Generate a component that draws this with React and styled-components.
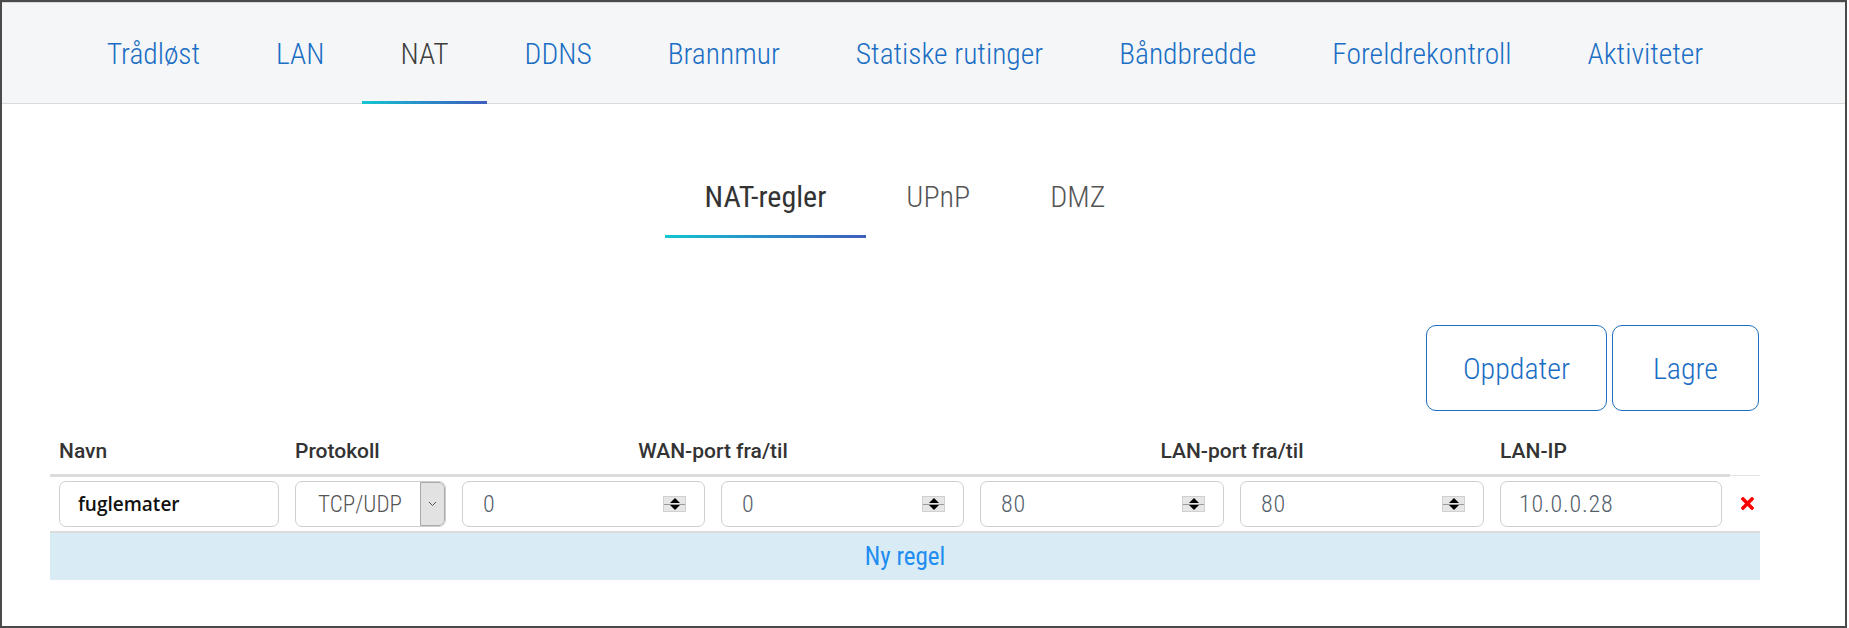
import React from "react";
import styled, { createGlobalStyle, css } from "styled-components";
import { FaTimes } from "react-icons/fa";

const cond = `"Roboto Condensed", "Liberation Sans Narrow", Roboto, sans-serif`;

const GlobalStyle = createGlobalStyle`
  html, body {
    margin: 0;
    padding: 0;
    background: #fff;
  }
  * {
    box-sizing: border-box;
  }
`;

const Frame = styled.div`
  width: 1847px;
  height: 628px;
  border: 2px solid #4a4a4a;
  background: #fff;
  font-family: ${cond};
  overflow: hidden;
`;

const TopNav = styled.nav`
  height: 102px;
  background: #f5f6f8;
  border-top: 1px solid #d8d8d8;
  border-bottom: 1px solid #dadada;
`;

const Container = styled.div`
  width: 1710px;
  margin-left: 48px;
`;

const NavList = styled.div`
  display: flex;
  justify-content: center;
  height: 101px;
`;

const gradientLine = css`
  content: "";
  position: absolute;
  left: 0;
  right: 0;
  bottom: 0;
  height: 3px;
  background: linear-gradient(90deg, #14c6d0 0%, #2a8cc8 50%, #3f5ebd 100%);
`;

const NavItem = styled.a`
  position: relative;
  display: flex;
  align-items: center;
  padding: 0 38px;
  font-size: 29.5px;
  font-weight: 300;
  color: ${(p) => (p.active ? "#3d3d3d" : "#1a6ec4")};
  text-decoration: none;

  ${(p) =>
    p.active &&
    css`
      &::after {
        ${gradientLine}
      }
    `}
`;

const SubTabs = styled.div`
  display: flex;
  justify-content: center;
  margin-top: 73px;
`;

const SubTab = styled.a`
  position: relative;
  padding: 0 40px 21px;
  line-height: 40px;
  font-size: 30px;
  font-weight: ${(p) => (p.active ? 400 : 300)};
  color: ${(p) => (p.active ? "#333" : "#555")};

  ${(p) =>
    p.active &&
    css`
      &::after {
        ${gradientLine}
      }
    `}
`;

const Actions = styled.div`
  display: flex;
  justify-content: flex-end;
  gap: 5px;
  margin-top: 87px;
  padding-right: 1px;
`;

const OutlineButton = styled.button`
  width: ${(p) => p.w}px;
  height: 86px;
  border: 1.5px solid #1a6ec4;
  border-radius: 10px;
  background: #fff;
  color: #1a6ec4;
  font-family: ${cond};
  font-size: 30px;
  font-weight: 300;
  cursor: pointer;
`;

const RuleTable = styled.table`
  width: 1710px;
  margin-top: 25px;
  border-collapse: collapse;
  table-layout: fixed;
`;

const Th = styled.th`
  padding: 0 8px 8px ${(p) => (p.first ? 9 : 8)}px;
  line-height: 30px;
  text-align: ${(p) => (p.center ? "center" : "left")};
  font-family: Roboto, sans-serif;
  font-size: 21px;
  font-weight: 500;
  color: #333;
  border-bottom: ${(p) => (p.thin ? "1px solid #e3e3e3" : "3px solid #dcdcdc")};
`;

const Td = styled.td`
  padding: 4px 8px 4px ${(p) => (p.first ? 9 : 8)}px;
  vertical-align: middle;
  text-align: ${(p) => (p.center ? "center" : "left")};
`;

const fieldBox = css`
  display: flex;
  align-items: center;
  width: 100%;
  height: 46px;
  border: 1px solid #cfcfcf;
  border-radius: 7px;
  background: #fff;
`;

const TextInput = styled.input`
  ${fieldBox}
  padding: 0 18px;
  font-family: ${(p) => (p.dark ? `"Open Sans", sans-serif` : cond)};
  font-size: ${(p) => (p.dark ? 19 : 24)}px;
  font-weight: ${(p) => (p.dark ? 600 : 300)};
  letter-spacing: ${(p) => (p.dark ? 0 : 0.8)}px;
  color: ${(p) => (p.dark ? "#111" : "#55606b")};
  outline: none;
`;

const SelectBox = styled.div`
  ${fieldBox}
  overflow: hidden;
`;

const SelectValue = styled.span`
  flex: 1;
  text-align: center;
  font-size: 23px;
  font-weight: 300;
  color: #555;
  padding-left: 4px;
`;

const SelectArrow = styled.span`
  display: flex;
  align-items: center;
  justify-content: center;
  width: 25px;
  height: 100%;
  background: #e2e2e2;
  border: 1px solid #a9a9a9;
  border-radius: 0 6px 6px 0;
  color: #555;
`;

const NumberBox = styled.div`
  ${fieldBox}
  justify-content: space-between;
  padding: 0 18px 0 20px;
  font-size: 24px;
  font-weight: 300;
  letter-spacing: 0.8px;
  color: #55606b;
`;

const Spinner = styled.span`
  display: flex;
  flex-direction: column;
  width: 23px;
  height: 16px;
  background: #e6e6e6;
  border: 1px solid #d0d0d0;
`;

const SpinHalf = styled.span`
  flex: 1;
  display: flex;
  align-items: center;
  justify-content: center;
  border-top: ${(p) => (p.down ? "1px solid #9a9a9a" : "none")};

  &::before {
    content: "";
    border-left: 5px solid transparent;
    border-right: 5px solid transparent;
    ${(p) =>
      p.down
        ? "border-top: 5px solid #000;"
        : "border-bottom: 5px solid #000;"}
  }
`;

const RemoveIcon = styled(FaTimes)`
  display: block;
  margin: 0 auto;
  color: #f00;
  font-size: 19px;
`;

const NewRuleCell = styled.td`
  height: 48px;
  background: #d9ecf5;
  border-top: 2px solid #dcdcdc;
  text-align: center;
  font-size: 25px;
  font-weight: 400;
  color: #1e8cf0;
  cursor: pointer;
`;

const navItems = [
  "Trådløst",
  "LAN",
  "NAT",
  "DDNS",
  "Brannmur",
  "Statiske rutinger",
  "Båndbredde",
  "Foreldrekontroll",
  "Aktiviteter",
];

const NumberField = ({ value }) => (
  <NumberBox>
    <span>{value}</span>
    <Spinner>
      <SpinHalf />
      <SpinHalf down />
    </Spinner>
  </NumberBox>
);

const ChevronDown = () => (
  <svg width="9" height="6" viewBox="0 0 9 6">
    <path d="M1 1l3.5 3.5L8 1" fill="none" stroke="#555" strokeWidth="1" />
  </svg>
);

export default function App() {
  return (
    <>
      <GlobalStyle />
      <Frame>
        <TopNav>
          <Container>
            <NavList>
              {navItems.map((item) => (
                <NavItem key={item} active={item === "NAT"}>
                  {item}
                </NavItem>
              ))}
            </NavList>
          </Container>
        </TopNav>

        <Container>
          <SubTabs>
            <SubTab active>NAT-regler</SubTab>
            <SubTab>UPnP</SubTab>
            <SubTab>DMZ</SubTab>
          </SubTabs>

          <Actions>
            <OutlineButton w={181}>Oppdater</OutlineButton>
            <OutlineButton w={147}>Lagre</OutlineButton>
          </Actions>

          <RuleTable>
            <colgroup>
              <col style={{ width: 237 }} />
              <col style={{ width: 167 }} />
              <col style={{ width: 259 }} />
              <col style={{ width: 259 }} />
              <col style={{ width: 260 }} />
              <col style={{ width: 260 }} />
              <col style={{ width: 238 }} />
              <col style={{ width: 30 }} />
            </colgroup>
            <thead>
              <tr>
                <Th first>Navn</Th>
                <Th>Protokoll</Th>
                <Th colSpan={2} center>
                  WAN-port fra/til
                </Th>
                <Th colSpan={2} center>
                  LAN-port fra/til
                </Th>
                <Th>LAN-IP</Th>
                <Th thin></Th>
              </tr>
            </thead>
            <tbody>
              <tr>
                <Td first>
                  <TextInput dark defaultValue="fuglemater" />
                </Td>
                <Td>
                  <SelectBox>
                    <SelectValue>TCP/UDP</SelectValue>
                    <SelectArrow>
                      <ChevronDown />
                    </SelectArrow>
                  </SelectBox>
                </Td>
                <Td>
                  <NumberField value="0" />
                </Td>
                <Td>
                  <NumberField value="0" />
                </Td>
                <Td>
                  <NumberField value="80" />
                </Td>
                <Td>
                  <NumberField value="80" />
                </Td>
                <Td>
                  <TextInput defaultValue="10.0.0.28" />
                </Td>
                <Td center>
                  <RemoveIcon />
                </Td>
              </tr>
              <tr>
                <NewRuleCell colSpan={8}>Ny regel</NewRuleCell>
              </tr>
            </tbody>
          </RuleTable>
        </Container>
      </Frame>
    </>
  );
}
